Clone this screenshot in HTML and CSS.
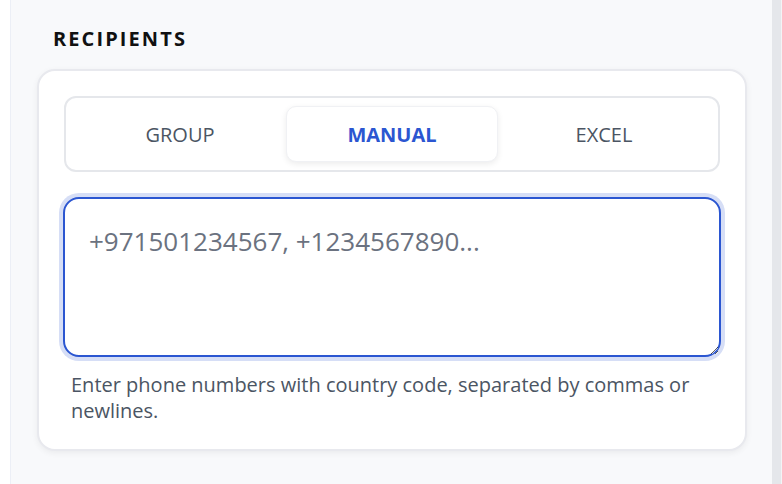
FILE: index.html
```html
<!DOCTYPE html>
<html lang="en">
<head>
  <meta charset="UTF-8">
  <title>Recipients</title>
  <link rel="stylesheet" href="styles.css">
</head>
<body>

<div class="pagina">
  <div class="panel">
    <h3 class="titulo">RECIPIENTS</h3>

    <div class="tarjeta">
      <div class="pestanas">
        <button class="pestana">GROUP</button>
        <button class="pestana activa">MANUAL</button>
        <button class="pestana">EXCEL</button>
      </div>

      <textarea class="numeros" placeholder="+971501234567, +1234567890..."></textarea>

      <p class="ayuda">Enter phone numbers with country code, separated by commas or newlines.</p>
    </div>
  </div>
  <div class="barra"></div>
</div>

</body>
</html>
```

FILE: styles.css
```css
html, body {
  margin: 0;
  height: 100%;
}
body {
  font-family: "Open Sans", "Noto Sans", sans-serif;
  background: #ffffff;
  color: #111827;
}
.pagina {
  display: flex;
  height: 100%;
  padding-left: 10px;
  box-sizing: border-box;
}
.panel {
  flex: 1;
  background: #f8f9fb;
  border-left: 1px solid #eceff6;
  padding: 26px 25px 0 26px;
}
.barra {
  width: 9px;
  background: #e5e7eb;
  border-right: 1px solid #f3f4f6;
}
.titulo {
  margin: 0 0 17px 16px;
  font-size: 20px;
  font-weight: 700;
  letter-spacing: 2.1px;
  line-height: 26px;
  color: #111111;
}
.tarjeta {
  background: #ffffff;
  border: 2px solid #e8e9ee;
  border-radius: 18px;
  padding: 25px 24px 25px 24px;
  box-shadow: 0 2px 6px rgba(0,0,0,0.06);
}
.pestanas {
  display: grid;
  grid-template-columns: 1fr 1fr 1fr;
  border: 2px solid #e5e7eb;
  border-radius: 12px;
  padding: 8px;
  margin: 0 1px;
}
.pestana {
  height: 56px;
  border: 1px solid transparent;
  border-radius: 10px;
  background: transparent;
  font-family: inherit;
  font-size: 20px;
  color: #4b5563;
  cursor: pointer;
}
.pestana.activa {
  background: #ffffff;
  border-color: #f0f1f4;
  box-shadow: 0 2px 6px rgba(0,0,0,0.08);
  color: #2b56d1;
  font-weight: 700;
}
.numeros {
  display: block;
  width: 100%;
  height: 160px;
  margin-top: 25px;
  box-sizing: border-box;
  border: 2px solid #2b56d1;
  border-radius: 16px;
  box-shadow: 0 0 0 4px #d6def6;
  padding: 24px 24px;
  font-family: inherit;
  font-size: 26px;
  color: #111827;
  resize: vertical;
  outline: none;
}
.numeros::placeholder {
  color: #6b7280;
}
.ayuda {
  margin: 15px 0 0 8px;
  font-size: 20px;
  line-height: 26px;
  color: #4b5563;
}
```
